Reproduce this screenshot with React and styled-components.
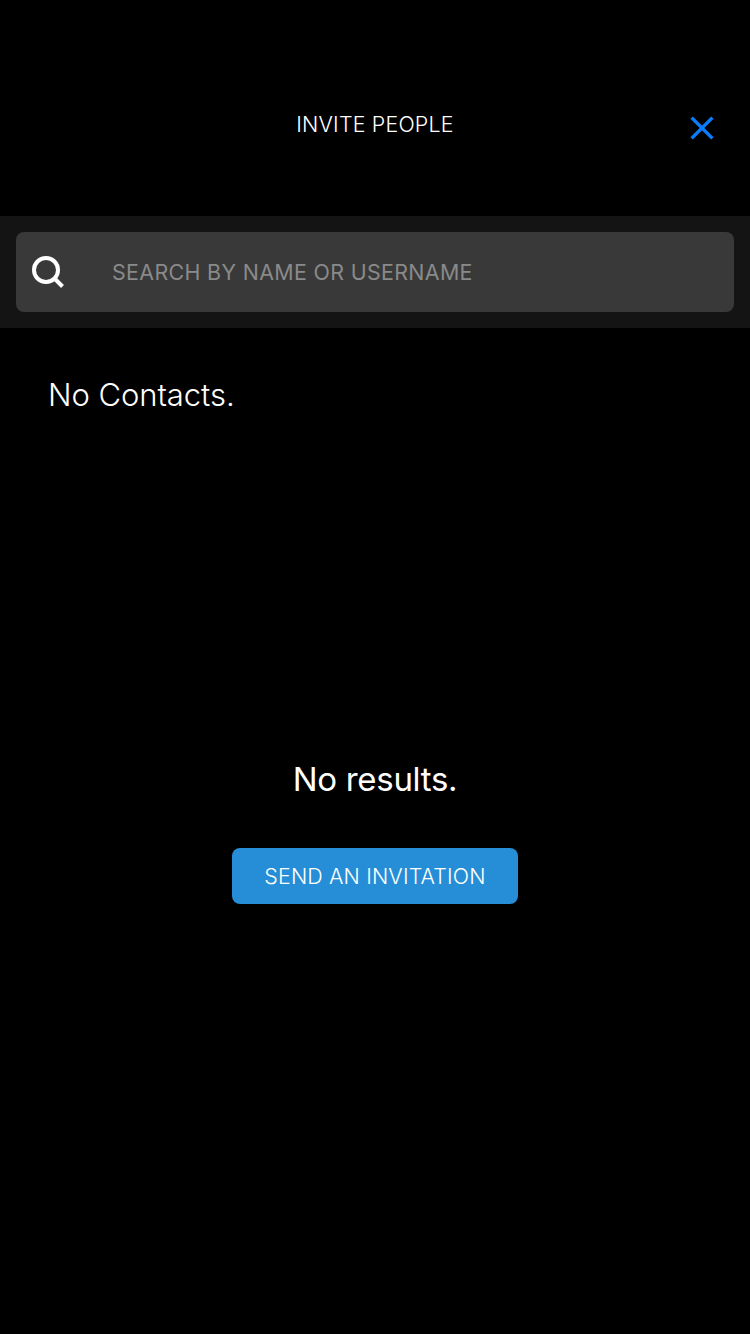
import React from "react";
import styled, { createGlobalStyle } from "styled-components";

const GlobalStyle = createGlobalStyle`
  * { box-sizing: border-box; }
  body {
    margin: 0;
    background: #000;
    color: #fff;
    font-family: Inter, "Liberation Sans", sans-serif;
  }
`;

const Screen = styled.main`
  display: flex;
  flex-direction: column;
  width: 750px;
  height: 1334px;
  background: #000;
`;

const Header = styled.header`
  display: grid;
  grid-template-columns: 1fr auto 1fr;
  align-items: start;
  height: 216px;
  padding: 110px 36px 0;
`;

const Title = styled.h1`
  grid-column: 2;
  margin: 0;
  font-size: 21.4px;
  font-weight: 300;
  line-height: 28px;
  letter-spacing: 0.2px;
  white-space: nowrap;
`;

const CloseButton = styled.button`
  justify-self: end;
  display: flex;
  margin: 6px 0 0;
  padding: 0;
  border: 0;
  background: none;
  color: #087dff;
`;

const SearchBar = styled.div`
  padding: 16px;
  height: 112px;
  background: #141414;
`;

const SearchField = styled.label`
  display: flex;
  align-items: center;
  gap: 48px;
  height: 80px;
  padding: 0 16px;
  border-radius: 8px;
  background: #393939;
`;

const SearchInput = styled.input`
  flex: 1;
  padding: 0;
  border: 0;
  outline: 0;
  background: transparent;
  color: #fff;
  font: 370 21.4px/28px Inter, "Liberation Sans", sans-serif;
  letter-spacing: 0.35px;
  &::placeholder { color: #8a8a8a; opacity: 1; }
`;

const ContactsMessage = styled.p`
  margin: 47px 48px 0;
  font-size: 31px;
  font-weight: 300;
  line-height: 40px;
  letter-spacing: -0.06px;
`;

const Results = styled.section`
  display: flex;
  flex-direction: column;
  align-items: center;
  margin-top: 344px;
`;

const ResultsMessage = styled.p`
  margin: 0 0 49px;
  font-size: 33px;
  font-weight: 370;
  line-height: 40px;
  letter-spacing: -0.3px;
`;

const InviteButton = styled.button`
  width: 286px;
  height: 56px;
  padding: 0;
  border: 0;
  border-radius: 8px;
  background: #268ed6;
  color: #fff;
  font: 300 21.4px/28px Inter, "Liberation Sans", sans-serif;
  letter-spacing: 0.16px;
`;

export default function App() {
  return (
    <Screen>
      <GlobalStyle />
      <Header>
        <Title>INVITE PEOPLE</Title>
        <CloseButton aria-label="Close">
          <svg width="24" height="24" viewBox="0 0 24 24" fill="none" stroke="currentColor" strokeWidth="3.4">
            <path d="M1.6 1.6 22.4 22.4M22.4 1.6 1.6 22.4" />
          </svg>
        </CloseButton>
      </Header>
      <SearchBar>
        <SearchField>
          <svg width="32" height="32" viewBox="0 0 32 32" fill="none" stroke="#fff" strokeWidth="4">
            <circle cx="14" cy="14" r="12" />
            <path d="m22 22 8.5 8.5" />
          </svg>
          <SearchInput placeholder="SEARCH BY NAME OR USERNAME" />
        </SearchField>
      </SearchBar>
      <ContactsMessage>No Contacts.</ContactsMessage>
      <Results>
        <ResultsMessage>No results.</ResultsMessage>
        <InviteButton>SEND AN INVITATION</InviteButton>
      </Results>
    </Screen>
  );
}
